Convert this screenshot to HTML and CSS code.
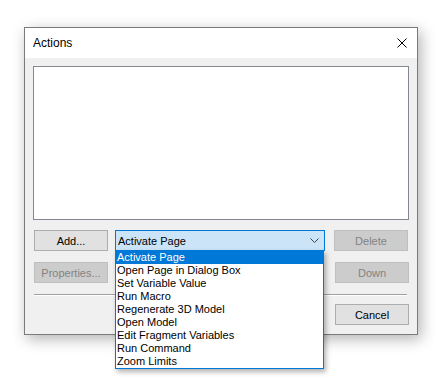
FILE: index.html
```html
<!DOCTYPE html>
<html>
<head>
<meta charset="utf-8">
<link rel="stylesheet" href="styles.css">
</head>
<body>
<div class="dialog">
  <div class="titlebar">
    <span class="title">Actions</span>
    <svg class="close" width="10" height="10" viewBox="0 0 10 10"><path d="M0.5 0.5 L9.5 9.5 M9.5 0.5 L0.5 9.5" stroke="#000" stroke-width="1" fill="none"/></svg>
  </div>
  <div class="content">
    <div class="listbox"></div>
    <div class="row row1">
      <div class="btn">Add...</div>
      <div class="combo">
        <span class="combo-text">Activate Page</span>
        <svg class="chev" width="9" height="5" viewBox="0 0 9 5"><path d="M0.5 0.5 L4.5 4.5 L8.5 0.5" stroke="#444" stroke-width="1" fill="none"/></svg>
        <ul class="dropdown">
          <li class="sel">Activate Page</li>
          <li>Open Page in Dialog Box</li>
          <li>Set Variable Value</li>
          <li>Run Macro</li>
          <li>Regenerate 3D Model</li>
          <li>Open Model</li>
          <li>Edit Fragment Variables</li>
          <li>Run Command</li>
          <li>Zoom Limits</li>
        </ul>
      </div>
      <div class="btn disabled">Delete</div>
    </div>
    <div class="row row2">
      <div class="btn disabled">Properties...</div>
      <div class="spacer"></div>
      <div class="btn disabled">Down</div>
    </div>
    <div class="sep"></div>
    <div class="row row3">
      <div class="spacer"></div>
      <div class="btn">Cancel</div>
    </div>
  </div>
</div>
</body>
</html>
```
FILE: styles.css
```css
html, body {
  margin: 0;
  padding: 0;
  background: #ffffff;
}
html {
  height: 100%;
}
body {
  min-height: 379px;
  font-family: "Liberation Sans", Arial, sans-serif;
  font-size: 11px;
  color: #000;
  overflow: hidden;
}
.dialog {
  margin: 27px 0 0 24px;
  width: 392px;
  height: 306px;
  border: 1px solid #7a7a7a;
  background: #f0f0f0;
  box-shadow: 3px 4px 14px rgba(0,0,0,0.30);
  display: flex;
  flex-direction: column;
}
.titlebar {
  height: 30px;
  background: #ffffff;
  display: flex;
  align-items: center;
  justify-content: space-between;
  padding: 0 10px 0 8px;
}
.title {
  font-size: 12px;
  margin-top: -1px;
}
.close {
  display: block;
}
.content {
  padding: 8px 8px 0 8px;
  display: flex;
  flex-direction: column;
}
.listbox {
  height: 152px;
  border: 1px solid #828790;
  background: #ffffff;
}
.row {
  display: flex;
  align-items: stretch;
  height: 22px;
}
.row1 {
  margin-top: 10px;
}
.row2 {
  margin-top: 10px;
}
.row3 {
  margin-top: 8px;
}
.btn {
  box-sizing: border-box;
  width: 74px;
  height: 21px;
  margin-left: 1px;
  border: 1px solid #adadad;
  background: #e1e1e1;
  display: flex;
  align-items: center;
  justify-content: center;
}
.btn.disabled {
  background: #cccccc;
  border-color: #bfbfbf;
  color: #838383;
}
.spacer {
  flex: 1;
}
.combo {
  position: relative;
  box-sizing: border-box;
  width: 210px;
  height: 21px;
  margin-left: 7px;
  margin-right: 8px;
  border: 1px solid #0078d7;
  background: #cce4f7;
  display: flex;
  align-items: center;
  padding-left: 2px;
}
.combo-text {
  flex: 1;
}
.chev {
  margin-right: 5px;
  display: block;
}
.dropdown {
  position: absolute;
  left: -1px;
  top: 19px;
  width: 207px;
  margin: 0;
  padding: 0;
  list-style: none;
  background: #ffffff;
  border: 1px solid #0078d7;
  box-shadow: 2px 3px 5px rgba(0,0,0,0.3);
  z-index: 5;
}
.dropdown li {
  height: 13px;
  line-height: 13px;
  padding-left: 1px;
  white-space: nowrap;
}
.dropdown li.sel {
  background: #0078d7;
  color: #ffffff;
}
.sep {
  margin: 10px 2px 0 1px;
  height: 0;
  border-top: 1px solid #a0a0a0;
  border-bottom: 1px solid #ffffff;
}
```
